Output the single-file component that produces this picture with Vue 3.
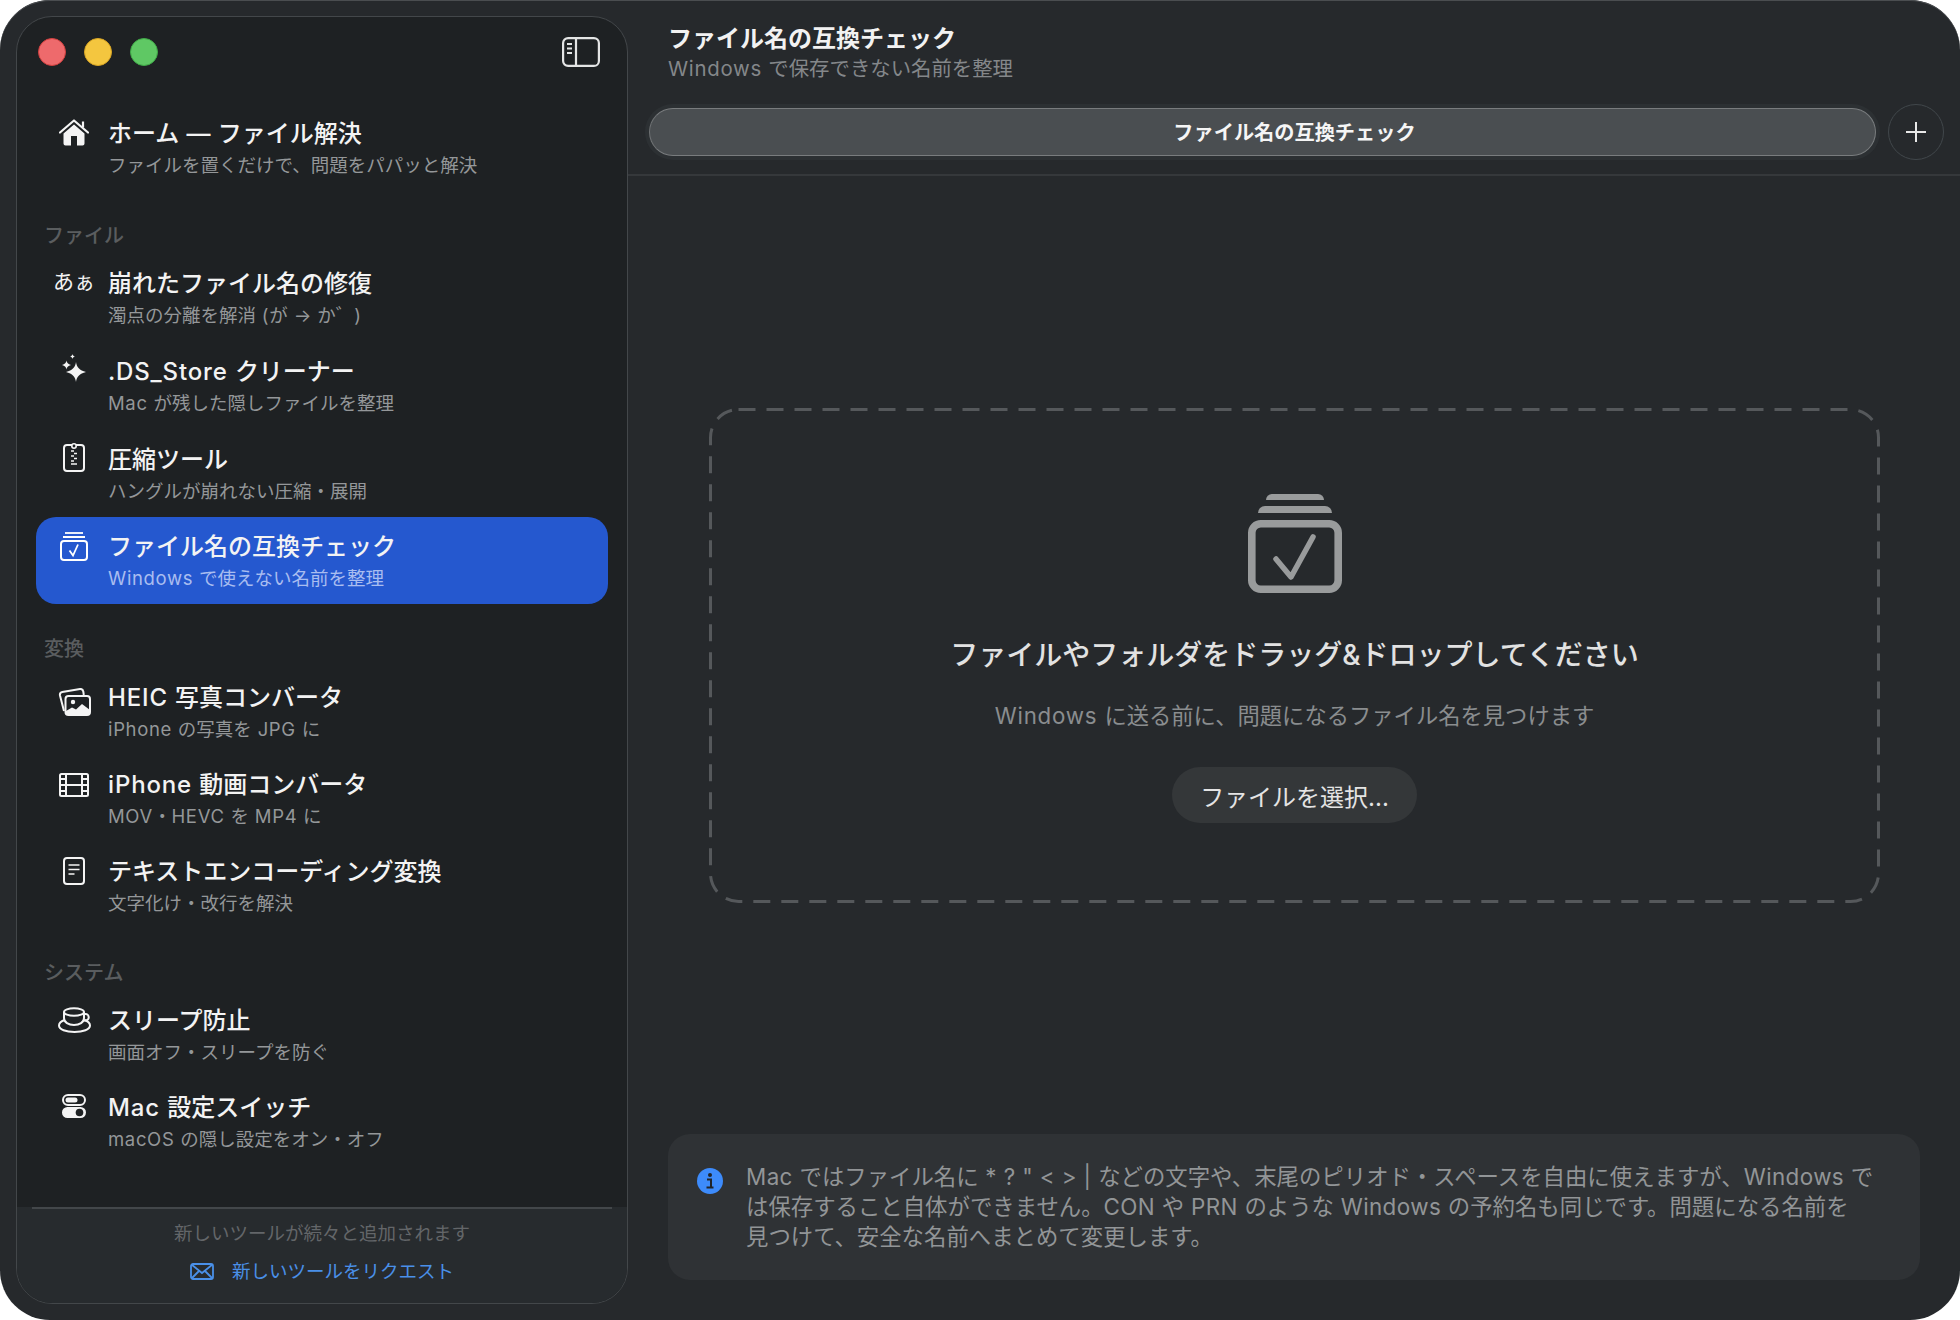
<script setup>
import { h } from 'vue'

const Txt = (p) =>
  p.t
    .split(/([\x20-\x7e]+)/)
    .filter(Boolean)
    .map((s) => (/^[\x20-\x7e]/.test(s) ? h('span', { class: 'lat' }, s) : s))

const groups = [
  { label: null, items: [
    { icon: 'home', title: 'ホーム — ファイル解決', sub: 'ファイルを置くだけで、問題をパパッと解決' },
  ]},
  { label: 'ファイル', items: [
    { icon: 'kana', title: '崩れたファイル名の修復', sub: '濁点の分離を解消 (が → か゛)', size: 'tall' },
    { icon: 'spark', title: '.DS_Store クリーナー', sub: 'Mac が残した隠しファイルを整理', size: 'taller' },
    { icon: 'zip', title: '圧縮ツール', sub: 'ハングルが崩れない圧縮・展開' },
    { icon: 'check', title: 'ファイル名の互換チェック', sub: 'Windows で使えない名前を整理', active: true },
  ]},
  { label: '変換', items: [
    { icon: 'photo', title: 'HEIC 写真コンバータ', sub: 'iPhone の写真を JPG に' },
    { icon: 'film', title: 'iPhone 動画コンバータ', sub: 'MOV・HEVC を MP4 に' },
    { icon: 'doc', title: 'テキストエンコーディング変換', sub: '文字化け・改行を解決' },
  ]},
  { label: 'システム', items: [
    { icon: 'cup', title: 'スリープ防止', sub: '画面オフ・スリープを防ぐ' },
    { icon: 'toggle', title: 'Mac 設定スイッチ', sub: 'macOS の隠し設定をオン・オフ' },
  ]},
]
</script>

<template>
  <div class="window">
    <aside class="sidebar">
      <div class="side-head">
        <div class="lights">
          <span class="light red"></span>
          <span class="light yellow"></span>
          <span class="light green"></span>
        </div>
        <svg class="panel-toggle" width="38" height="30" viewBox="0 0 38 30" fill="none" stroke="#e4e5e5" stroke-width="2.2">
          <rect x="1.1" y="1.1" width="35.8" height="27.8" rx="5" />
          <path d="M14 1v28" />
          <path d="M5 7h5M5 11.5h5M5 16h5" stroke-width="1.8" />
        </svg>
      </div>
      <nav class="nav">
        <section v-for="(g, i) in groups" :key="i" class="group">
          <h3 v-if="g.label" class="group-label">{{ g.label }}</h3>
          <div v-for="it in g.items" :key="it.title" class="item" :class="[it.size, { active: it.active }]">
            <div class="item-icon" :class="'ic-' + it.icon">
              <svg v-if="it.icon === 'home'" width="30" height="27" viewBox="0 0 30 27">
                <path d="M1 13.5 15 1.5l14 12" fill="none" stroke="#f4f4f4" stroke-width="2.2" stroke-linejoin="round" stroke-linecap="round" />
                <path d="M24 2.5v6" stroke="#f4f4f4" stroke-width="2.2" />
                <path fill-rule="evenodd" fill="#f4f4f4" d="M15 5.5 4.500 14.500V24.500a2 2 0 0 0 2 2h17a2 2 0 0 0 2-2V14.500ZM12 17h6v9.500h-6Z" />
              </svg>
              <span v-else-if="it.icon === 'kana'" class="kana">あぁ</span>
              <svg v-else-if="it.icon === 'spark'" width="24" height="28" viewBox="0 0 24 28" fill="#f4f4f4">
                <path d="M14 8c.6 5 3.500 8.600 10 10-6.500 1.400-9.400 5-10 10-.6-5-3.500-8.600-10-10 6.500-1.400 9.400-5 10-10Z" />
                <path d="M4.500 6.500c.3 2.300 1.500 3.600 4.500 4.500-3 .9-4.200 2.200-4.500 4.500C4.200 13.200 3 11.900 0 11c3-.9 4.200-2.200 4.500-4.500Z" />
                <path d="M10.500 0c.2 1.300.8 2 2.300 2.500-1.500.5-2.100 1.200-2.300 2.500-.2-1.300-.8-2-2.300-2.500C9.700 2 10.300 1.300 10.500 0Z" />
              </svg>
              <svg v-else-if="it.icon === 'zip'" width="22" height="30" viewBox="0 0 22 30" fill="none" stroke="#f4f4f4" stroke-width="2">
                <rect x="1" y="3" width="20" height="26" rx="3" />
                <circle cx="11" cy="4" r="2.200" fill="#1e2123" stroke-width="1.6" />
                <path d="M8 9h3M11 11.500h3M8 14h3M11 16.500h3M8 19h3M8 22h6" stroke-width="1.500" />
              </svg>
              <svg v-else-if="it.icon === 'check'" width="28" height="29" viewBox="0 0 28 29" fill="none" stroke="#fff" stroke-width="2">
                <path d="M5 1h18" stroke-width="1.800" />
                <path d="M3 5h22" stroke-width="2" />
                <rect x="1" y="9" width="26" height="19" rx="3" />
                <path d="M9.500 18.500l3.500 5 5-11" stroke-width="1.800" />
              </svg>
              <svg v-else-if="it.icon === 'photo'" width="33" height="28" viewBox="0 0 33 28" fill="none" stroke="#f4f4f4" stroke-width="2">
                <path d="M6 23 2 7.500A3 3 0 0 1 4.300 4L22 1a3 3 0 0 1 3.300 2.500L25.800 7" />
                <rect x="7.500" y="8" width="24.500" height="19" rx="3" />
                <circle cx="15" cy="14" r="2.200" fill="#f4f4f4" stroke="none" />
                <path d="M8 27v-4l6-3.500 4 2 6-5.500 8 6v2a3 3 0 0 1-3 3H10Z" fill="#f4f4f4" stroke="none" />
              </svg>
              <svg v-else-if="it.icon === 'film'" width="30" height="24" viewBox="0 0 30 24" fill="none" stroke="#f4f4f4" stroke-width="2">
                <rect x="1" y="1" width="28" height="22" rx="1.500" />
                <path d="M7 1v22M23 1v22M7 12h16M1 6h6M1 12h6M1 18h6M23 6h6M23 12h6M23 18h6" />
              </svg>
              <svg v-else-if="it.icon === 'doc'" width="22" height="28" viewBox="0 0 22 28" fill="none" stroke="#f4f4f4" stroke-width="2">
                <rect x="1" y="1" width="20" height="26" rx="3" />
                <path d="M5.500 8h11M5.500 12.500h11M5.500 17h6" stroke-width="1.600" />
              </svg>
              <svg v-else-if="it.icon === 'cup'" width="33" height="26" viewBox="0 0 33 26" fill="none" stroke="#f4f4f4" stroke-width="2">
                <ellipse cx="16" cy="5" rx="10" ry="3.800" />
                <path d="M6 5v6c0 4.500 4.500 7 10 7s10-2.500 10-7V5" />
                <path d="M26 7h1.500a3 3 0 0 1 0 6.500H25" />
                <path d="M6.500 13C3 14.300 1 16 1 18.500 1 22.500 8 25 16.500 25S32 22.500 32 18.500c0-2.500-2-4.200-5.500-5.500" />
              </svg>
              <svg v-else-if="it.icon === 'toggle'" width="24" height="24" viewBox="0 0 24 24">
                <rect x="1" y="1" width="22" height="10" rx="5" fill="none" stroke="#f4f4f4" stroke-width="2" />
                <rect x="3.500" y="3.500" width="12" height="5" rx="2.500" fill="#f4f4f4" />
                <rect x="0" y="13" width="24" height="11" rx="5.500" fill="#f4f4f4" />
                <circle cx="17.500" cy="18.500" r="3.800" fill="#1e2123" />
              </svg>
            </div>
            <div class="item-text">
              <div class="item-title"><Txt :t="it.title" /></div>
              <div class="item-sub"><Txt :t="it.sub" /></div>
            </div>
          </div>
        </section>
      </nav>
      <footer class="side-foot">
        <div class="foot-note">新しいツールが続々と追加されます</div>
        <div class="foot-link">
          <svg width="24" height="17" viewBox="0 0 24 17" fill="none" stroke="#4a90e8" stroke-width="1.800">
            <rect x="1" y="1" width="22" height="15" rx="2" />
            <path d="M1.500 1.500 12 10l10.500-8.500M1.500 15.500 9 8M22.500 15.500 15 8" />
          </svg>
          <span>新しいツールをリクエスト</span>
        </div>
      </footer>
    </aside>

    <main class="main">
      <header class="main-head">
        <div class="main-title">ファイル名の互換チェック</div>
        <div class="main-sub"><Txt t="Windows で保存できない名前を整理" /></div>
      </header>
      <div class="tabs">
        <div class="track"><div class="tab">ファイル名の互換チェック</div></div>
        <button class="plus">
          <svg width="22" height="22" viewBox="0 0 22 22" stroke="#e8e8e8" stroke-width="2"><path d="M11 1v20M1 11h20" /></svg>
        </button>
      </div>
      <div class="content">
        <div class="drop">
          <svg class="dash" fill="none">
            <rect x="1.500" y="1.500" rx="28" ry="28" stroke="#55585b" stroke-width="3" stroke-dasharray="17 11" />
          </svg>
          <svg class="big-icon" width="94" height="99" viewBox="0 0 94 99" fill="#999b9c">
            <path d="M18 6a6 6 0 0 1 6-6h46a6 6 0 0 1 6 6Z" />
            <path d="M10 19a7 7 0 0 1 7-7h60a7 7 0 0 1 7 7Z" />
            <rect x="3.800" y="29.800" width="86.400" height="65.400" rx="9" fill="none" stroke="#999b9c" stroke-width="7.600" />
            <path d="M28 65l15 18 22-40" fill="none" stroke="#999b9c" stroke-width="5.500" stroke-linecap="round" stroke-linejoin="round" />
          </svg>
          <div class="drop-title">ファイルやフォルダをドラッグ&amp;ドロップしてください</div>
          <div class="drop-sub"><Txt t="Windows に送る前に、問題になるファイル名を見つけます" /></div>
          <button class="pick">ファイルを選択...</button>
        </div>
      </div>
      <div class="info">
        <svg class="info-icon" width="26" height="26" viewBox="0 0 26 26">
          <circle cx="13" cy="13" r="13" fill="#3d8bfb" />
          <circle cx="13" cy="7" r="2" fill="#20242a" />
          <path d="M10 11.500h4V19M9.500 19.500h7" fill="none" stroke="#20242a" stroke-width="2" />
        </svg>
        <p class="info-text"><Txt t='Mac ではファイル名に * ? " < > | などの文字や、末尾のピリオド・スペースを自由に使えますが、Windows で' /><br /><Txt t="は保存すること自体ができません。CON や PRN のような Windows の予約名も同じです。問題になる名前を" /><br />見つけて、安全な名前へまとめて変更します。</p>
      </div>
    </main>
  </div>
</template>

<style>
html, body { margin: 0; background: #ffffff; }
.lat { letter-spacing: 0.035em; }
</style>

<style scoped>
.window {
  width: 1960px;
  height: 1320px;
  display: flex;
  box-sizing: border-box;
  padding: 16px 0 16px 16px;
  background: #26292c;
  border-radius: 50px;
  overflow: hidden;
  box-shadow: inset 0 1px 0 #4a4d50;
  font-family: "Inter", "Noto Sans CJK JP", sans-serif;
  color: #f2f2f2;
}
.sidebar {
  width: 612px;
  flex: none;
  box-sizing: border-box;
  display: flex;
  flex-direction: column;
  background: #1e2123;
  border: 1.5px solid #43474a;
  border-radius: 36px;
  overflow: hidden;
}
.side-head {
  height: 87px;
  flex: none;
  display: flex;
  align-items: flex-start;
  justify-content: space-between;
  padding: 20px 27px 0 21px;
  box-sizing: border-box;
}
.lights { display: flex; gap: 18px; padding-top: 1px; }
.light { width: 28px; height: 28px; border-radius: 50%; box-sizing: border-box; }
.red { background: #ee6a6c; border: 1px solid #d1403f; }
.yellow { background: #f4c63f; border: 1px solid #d8a524; }
.green { background: #5fc864; border: 1px solid #3fa947; }
.nav { flex: 1; min-height: 0; padding: 0 19px; }
.group:nth-child(2) { margin-top: 33px; }
.group:nth-child(3) { margin-top: 33px; }
.group:nth-child(4) { margin-top: 32px; }
.group-label {
  margin: 0 0 6px 8px;
  height: 24px;
  line-height: 24px;
  font-size: 20px;
  font-weight: 500;
  color: #5a5d5f;
}
.group:nth-child(2) .group-label { margin-bottom: 5px; }
.group:nth-child(3) .group-label { margin-bottom: 7px; }
.item {
  height: 87px;
  display: flex;
  align-items: center;
  border-radius: 20px;
  box-sizing: border-box;
  padding-top: 4px;
}
.item.tall { height: 88px; }
.item.taller { height: 89px; }
.item.active { background: #2558cf; }
.item-icon {
  width: 72px;
  flex: none;
  height: 60px;
  box-sizing: border-box;
  padding-left: 4px;
  display: flex;
  align-items: flex-start;
  justify-content: center;
}
.ic-home svg { margin-top: -1px; }
.ic-spark svg { margin-top: -4px; }
.ic-zip svg { margin-top: -4px; }
.ic-check svg { margin-top: -1px; }
.ic-photo svg { margin-top: 4px; }
.ic-film svg { margin-top: 2px; }
.ic-doc svg { margin-top: -1px; }
.kana { font-size: 21px; line-height: 30px; margin-top: -2px; color: #f2f2f2; white-space: nowrap; }
.item-text { min-width: 0; }
.item-title {
  font-size: 24px;
  line-height: 32px;
  font-weight: 500;
  color: #f3f3f3;
  white-space: nowrap;
}
.item-sub {
  font-size: 18.500px;
  line-height: 31px;
  color: #949799;
  white-space: nowrap;
}
.active .item-sub { color: #a9bdf0; }
.side-foot {
  height: 96px;
  flex: none;
  margin: 0;
  background: #272b2e;
  display: flex;
  flex-direction: column;
  align-items: center;
  position: relative;
}
.side-foot::before {
  content: "";
  position: absolute;
  left: 15px;
  right: 15px;
  top: 0;
  height: 2px;
  background: #43474a;
}
.foot-note { margin-top: 12px; font-size: 18.500px; line-height: 28px; color: #636669; }
.foot-link {
  margin-top: 10px;
  display: flex;
  align-items: center;
  gap: 18px;
  font-size: 18.500px;
  line-height: 28px;
  color: #4a90e8;
}
.main { flex: 1; min-width: 0; display: flex; flex-direction: column; }
.main-head { height: 88px; padding: 7px 0 0 40px; box-sizing: border-box; }
.main-title { font-size: 24px; line-height: 32px; font-weight: 700; color: #f2f2f2; }
.main-sub { font-size: 20.400px; line-height: 28px; color: #84878a; }
.tabs {
  height: 72px;
  box-sizing: border-box;
  display: flex;
  align-items: flex-start;
  padding: 0 16px 0 17px;
  gap: 8px;
  border-bottom: 2px solid #35383b;
}
.track {
  flex: 1;
  height: 56px;
  box-sizing: border-box;
  padding: 4px;
  border-radius: 28px;
  background: #2c3033;
}
.tab {
  height: 48px;
  box-sizing: border-box;
  border-radius: 24px;
  background: #4a4e51;
  border: 1.500px solid #797c7e;
  border-left-color: #6f7274;
  padding: 0 0 2px 64px;
  display: flex;
  align-items: center;
  justify-content: center;
  font-size: 20.200px;
  font-weight: 700;
  color: #f5f5f5;
}
.plus {
  width: 56px;
  height: 56px;
  flex: none;
  padding: 0;
  border-radius: 50%;
  background: transparent;
  border: 1.500px solid #41474b;
  display: flex;
  align-items: center;
  justify-content: center;
}
.content { flex: 1; min-height: 0; padding: 232px 80px 0 81px; box-sizing: border-box; }
.drop {
  position: relative;
  height: 495px;
  box-sizing: border-box;
  display: flex;
  flex-direction: column;
  align-items: center;
  padding-top: 86px;
}
.dash { position: absolute; inset: 0; width: 100%; height: 100%; }
.dash rect { width: calc(100% - 3px); height: calc(100% - 3px); }
.big-icon { display: block; flex: none; }
.drop-title {
  margin-top: 43px;
  font-size: 28px;
  line-height: 38px;
  font-weight: 500;
  color: #e2e2e2;
}
.drop-sub { margin-top: 26px; font-size: 22.300px; line-height: 32px; color: #8a8d8f; }
.pick {
  margin-top: 35px;
  width: 245px;
  height: 56px;
  border: 0;
  border-radius: 28px;
  background: #343739;
  color: #e4e4e4;
  font: inherit;
  font-size: 24px;
  padding: 0;
}
.info {
  margin: 0 40px 24px 40px;
  height: 146px;
  box-sizing: border-box;
  border-radius: 22px;
  background: #2f3235;
  display: flex;
  align-items: flex-start;
  padding: 28px 20px 0 29px;
  gap: 23px;
  flex: none;
}
.info-icon { flex: none; margin-top: 6px; }
.info-text {
  margin: 0;
  font-size: 22.400px;
  line-height: 30px;
  color: #929597;
  white-space: nowrap;
}
.info-text :deep(.lat) { letter-spacing: 0.018em; }
</style>
